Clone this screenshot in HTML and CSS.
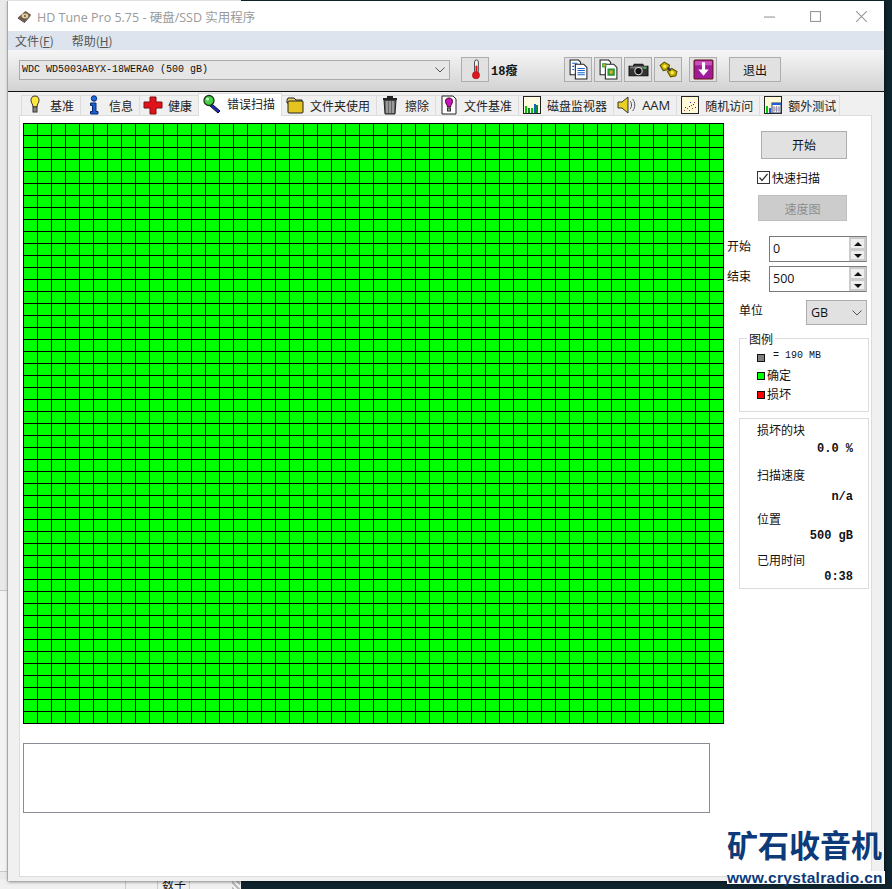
FILE: index.html
```html
<!DOCTYPE html>
<html lang="zh">
<head>
<meta charset="utf-8">
<title>HD Tune Pro 5.75</title>
<link rel="stylesheet" href="styles.css">
</head>
<body>
<div class="desktop">
  <div class="desk-left"><div class="desk-line"></div></div>
  <div class="desk-bottom"><span class="desk-cell wide"></span><span class="desk-cell">数子</span><span class="desk-cell"></span><span class="desk-grip"></span></div>
  <div class="window">
    <header class="titlebar">
      <svg class="app-icon" viewBox="0 0 16 16"><path d="M1 9 9 2l6 4-7 8z" fill="#6b5a45"/><path d="M1 9l7 5 7-8-1 2-6 7-7-5z" fill="#2e2a26"/><ellipse cx="8.500" cy="7.500" rx="3.600" ry="2.600" fill="#e8c9a0"/><circle cx="8.500" cy="7.500" r="1" fill="#554"/></svg>
      <span class="title-text">HD Tune Pro 5.75 - 硬盘/SSD 实用程序</span>
      <div class="win-controls">
        <svg class="win-btn" viewBox="0 0 10 10"><path d="M0 5.500h10" stroke="#999" fill="none"/></svg>
        <svg class="win-btn" viewBox="0 0 10 10"><rect x=".5" y=".5" width="9" height="9" stroke="#999" fill="none"/></svg>
        <svg class="win-btn" viewBox="0 0 10 10"><path d="M0 0l10 10M10 0 0 10" stroke="#999" fill="none"/></svg>
      </div>
    </header>
    <nav class="menubar"><span class="menu-item">文件(<u>F</u>)</span><span class="menu-item">帮助(<u>H</u>)</span></nav>
    <div class="toolbar">
      <div class="drive-select"><span class="drive-name">WDC WD5003ABYX-18WERA0 (500 gB)</span>
        <svg class="chev" viewBox="0 0 10 6"><path d="M.5 .5 5 5 9.500 .5" fill="none" stroke="#555"/></svg></div>
      <div class="tool-btn therm"><svg viewBox="0 0 20 22"><rect x="9" y="1" width="4" height="14" rx="2" fill="#f4f4f4" stroke="#444"/><rect x="10" y="7" width="2" height="9" fill="#d8141c"/><circle cx="10.500" cy="17" r="3.800" fill="#e0141c" stroke="#8a1015" stroke-width=".5"/></svg></div>
      <b class="temp">18癈</b>
      <div class="tool-group">
        <div class="tool-btn"><svg viewBox="0 0 20 20"><path d="M2 1h8l2 2v12H2z" fill="#fff" stroke="#222"/><path d="M7 5h8l3 3v11H7z" fill="#fff" stroke="#222"/><path d="M4 4h5M4 7h2M4 10h2M9 9h7M9 11h7M9 13h7M9 15h7" stroke="#1763c9"/></svg></div>
        <div class="tool-btn"><svg viewBox="0 0 20 20"><path d="M2 1h8l2 2v12H2z" fill="#fff" stroke="#222"/><path d="M7 5h8l3 3v11H7z" fill="#fff" stroke="#222"/><rect x="4" y="4" width="4" height="4" fill="#2a9a3a"/><rect x="9" y="9" width="7" height="7" fill="#2a9a3a"/><rect x="11" y="11" width="3" height="3" fill="#e8b020"/><rect x="5" y="5" width="2" height="2" fill="#e8b020"/></svg></div>
        <div class="tool-btn"><svg viewBox="0 0 20 20"><path d="M1 7h4l1-2h8l1 2h4v9H1z" fill="#333" stroke="#111"/><rect x="2" y="7" width="16" height="2" fill="#777"/><circle cx="10" cy="11.500" r="3.500" fill="#111" stroke="#ddd"/><rect x="15" y="8" width="2" height="1.500" fill="#3c3"/></svg></div>
        <div class="tool-btn"><svg viewBox="0 0 20 20"><g fill="#c8b400" stroke="#5a5200"><path d="M2 6l4-3 5 3-1 4-5 1z"/><path d="M9 12l4-3 5 3-1 4-5 1z"/></g><circle cx="6.500" cy="7" r="1.500" fill="#ffe860"/><circle cx="13.500" cy="13" r="1.500" fill="#ffe860"/><path d="M9 8l3 3" stroke="#333" stroke-width="2"/></svg></div>
        <div class="tool-btn save"><svg viewBox="0 0 20 20"><rect x="1" y="1" width="18" height="18" rx="1" fill="#a01a9a" stroke="#611"/><rect x="2" y="2" width="16" height="4" fill="#c850c0"/><path d="M8.500 3h3v7H15l-5 6-5-6h3.500z" fill="#fff"/></svg></div>
        <div class="exit-btn">退出</div>
      </div>
    </div>
    <div class="body">
      <div class="tabs">
        <div class="tab"><svg class="tab-icon" viewBox="0 0 20 20"><path d="M10 1c3 0 4 2 4 4.500S12 9 12 12H8c0-3-2-4-2-6.500S7 1 10 1z" fill="#ffe83c" stroke="#333"/><rect x="8" y="12" width="4" height="5" fill="#888" stroke="#333"/></svg>基准</div>
        <div class="tab"><svg class="tab-icon" viewBox="0 0 20 20"><circle cx="10" cy="3.500" r="2.700" fill="#1a6be0" stroke="#0a2a70"/><path d="M6.500 8H12v8.500h2V19H6.500v-2.500h2v-6h-2z" fill="#1a5fd0" stroke="#0a2a70"/></svg>信息</div>
        <div class="tab"><svg class="tab-icon" viewBox="0 0 20 20"><path d="M7 2h6v5h6v6h-6v6H7v-6H1V7h6z" fill="#e2121a" stroke="#7a1015"/></svg>健康</div>
        <div class="tab active"><svg class="tab-icon" viewBox="0 0 20 20"><path d="M10 10l8 7-2 2-8-7z" fill="#1c2fa8" stroke="#0a0a40"/><circle cx="7" cy="6.500" r="5" fill="#46d046" stroke="#1b3a1b" stroke-width="1.300"/><circle cx="5.500" cy="5" r="1.500" fill="#c4f5c4"/></svg>错误扫描</div>
        <div class="tab"><svg class="tab-icon" viewBox="0 0 20 20"><path d="M2 5l1-2h6l2 2h6v3H2z" fill="#e8d070" stroke="#222"/><rect x="3" y="6" width="15" height="12" rx="1" fill="#e6c420" stroke="#222"/></svg>文件夹使用</div>
        <div class="tab"><svg class="tab-icon" viewBox="0 0 20 20"><path d="M3 4h14M8 3.500V2h4v1.500" stroke="#222" stroke-width="2" fill="none"/><path d="M4 5h12l-1 14H5z" fill="#666" stroke="#222"/><path d="M7 6v12M10 6v12M13 6v12" stroke="#ccc"/></svg>擦除</div>
        <div class="tab"><svg class="tab-icon" viewBox="0 0 20 20"><path d="M3 1h11l3 3v15H3z" fill="#fff" stroke="#222"/><path d="M10 3c2.500 0 3.500 1.500 3.500 3.500S11.500 10 11.500 12h-3c0-2-2-3.500-2-5.500S7.500 3 10 3z" fill="#c814c0" stroke="#401"/><rect x="8.500" y="13" width="3" height="3" fill="#999" stroke="#333"/></svg>文件基准</div>
        <div class="tab"><svg class="tab-icon" viewBox="0 0 20 20"><rect x="1.500" y="1.500" width="17" height="17" fill="#fffbe0" stroke="#222"/><path d="M3 18v-7h2v7zM9 18v-5h2v5z" fill="#0c0"/><path d="M6 18v-5h2v5zM14 18v-8h2v8z" fill="#0a8a2a"/><path d="M12 18V9h2v9z" fill="#1d5fd0"/></svg>磁盘监视器</div>
        <div class="tab tab-aam"><svg class="tab-icon" viewBox="0 0 20 20"><path d="M1 7h4l6-5v16l-6-5H1z" fill="#ead020" stroke="#333"/><path d="M13 6c2 2 2 6 0 8M15.500 4c3 3 3 9 0 12" stroke="#555" fill="none"/></svg>AAM</div>
        <div class="tab"><svg class="tab-icon" viewBox="0 0 20 20"><rect x="1.500" y="1.500" width="17" height="17" fill="#fffbd8" stroke="#222"/><path d="M4 15h1v1H4zM7 13h1v1H7zM9 15h1v1H9zM11 10h1v1h-1zM14 7h1v1h-1zM12 13h1v1h-1z" fill="#d22"/><path d="M5 12h1v1H5zM9 11h1v1H9zM13 9h1v1h-1zM15 12h1v1h-1zM10 7h1v1h-1z" fill="#22c"/></svg>随机访问</div>
        <div class="tab tab-last"><svg class="tab-icon" viewBox="0 0 20 20"><rect x="1.500" y="1.500" width="17" height="17" fill="#fffbd8" stroke="#222"/><path d="M3 18v-7h2v7z" fill="#0c0"/><path d="M6 18v-5h2v5z" fill="#1d5fd0"/><rect x="9" y="8" width="9" height="10" fill="#fff" stroke="#335"/><rect x="9" y="8" width="9" height="2" fill="#1d5fd0"/><path d="M11 11v6M13.500 11v6M16 11v6M9 13h9M9 15h9" stroke="#99a"/></svg>额外测试</div>
      </div>
      <main class="panel">
        <section class="left-col">
          <div class="map"></div>
          <div class="log"></div>
        </section>
        <aside class="right-col">
          <div class="btn btn-start">开始</div>
          <div class="check-row"><svg class="check" viewBox="0 0 13 13"><rect x=".5" y=".5" width="12" height="12" fill="#fff" stroke="#333"/><path d="M2.500 6.500 5 9.500 10.500 3" fill="none" stroke="#333" stroke-width="1.200"/></svg>快速扫描</div>
          <div class="btn btn-speed">速度图</div>
          <div class="field-row first"><span class="field-label">开始</span><div class="spin"><span class="spin-val">0</span><span class="spin-btns"><i class="up"></i><i class="down"></i></span></div></div>
          <div class="field-row second"><span class="field-label">结束</span><div class="spin"><span class="spin-val">500</span><span class="spin-btns"><i class="up"></i><i class="down"></i></span></div></div>
          <div class="unit-row"><span class="unit-label">单位</span><div class="unit-select">GB<svg class="chev" viewBox="0 0 10 6"><path d="M.5 .5 5 5 9.500 .5" fill="none" stroke="#555"/></svg></div></div>
          <div class="legend">
            <div class="legend-title">图例</div>
            <div class="legend-row mono-row"><span class="swatch gray"></span><span class="legend-size">= 190 MB</span></div>
            <div class="legend-row"><span class="swatch green"></span>确定</div>
            <div class="legend-row"><span class="swatch red"></span>损坏</div>
          </div>
          <div class="stats">
            <div class="stat-label">损坏的块</div><div class="stat-value v1">0.0 %</div>
            <div class="stat-label l2">扫描速度</div><div class="stat-value v2">n/a</div>
            <div class="stat-label l3">位置</div><div class="stat-value v3">500 gB</div>
            <div class="stat-label l4">已用时间</div><div class="stat-value v4">0:38</div>
          </div>
        </aside>
      </main>
    </div>
  </div>
  <div class="watermark">
    <div class="wm-cn">矿石收音机</div>
    <div class="wm-en">www.crystalradio.cn</div>
  </div>
</div>
</body>
</html>
```

FILE: styles.css
```css
* { box-sizing: border-box; }
html, body { margin: 0; padding: 0; }
body { font-family: "Noto Sans CJK SC", "Noto Sans", sans-serif; font-size: 12px; color: #111; }
.desktop { position: relative; width: 892px; height: 889px; overflow: hidden; background: #10242e; }
.desktop::before { content: ""; position: absolute; left: 0; top: 0; width: 241px; height: 2px; background: #f4f4f4; }
.desk-left { position: absolute; left: 0; top: 0; width: 8px; height: 889px; background: #e9e9e9; }
.desk-line { margin-top: 590px; height: 282px; border-top: 1px solid #c8c8c8; border-bottom: 1px solid #c8c8c8; background: #f3f3f3; }
.desk-bottom { position: absolute; left: 0; bottom: 0; width: 241px; height: 10px; background: #f0f0f0; display: flex; align-items: flex-start; overflow: hidden; padding-left: 125px; }
.desk-cell { width: 32px; padding-left: 4px; height: 10px; line-height: 10px; border-left: 1px solid #ccc; flex: none; }
.desk-grip { margin-left: 11px; margin-top: 2px; width: 8px; height: 8px; background: repeating-linear-gradient(45deg, #bbb 0 2px, #f0f0f0 2px 4px); }

.window { position: absolute; left: 7px; top: 1px; width: 877px; height: 880px; display: flex; flex-direction: column; background: #f0f0f0; border-left: 1px solid #a8a8a8; box-shadow: 1px 1px 3px rgba(0,0,0,.45); }
.titlebar { height: 30px; background: #fff; display: flex; align-items: center; padding-left: 9px; flex: none; }
.app-icon { width: 15px; height: 15px; margin-right: 5px; }
.title-text { font-family: "Open Sans", "Noto Sans CJK SC", sans-serif; font-size: 12.500px; color: #9a9a9a; }
.win-controls { margin-left: auto; display: flex; gap: 35px; padding-right: 17px; }
.win-btn { width: 11px; height: 11px; display: block; }
.menubar { height: 19px; background: #dde4ed; display: flex; padding-left: 7px; gap: 18px; flex: none; line-height: 20px; color: #555; font-size: 12px; }
.toolbar { height: 42px; flex: none; background: linear-gradient(#f6f6f6, #d2d2d2); border-bottom: 1px solid #111; display: flex; align-items: center; padding: 0 0 2px 11px; }
.drive-select { width: 431px; height: 20px; background: #e6e6e6; border: 1px solid #ababab; display: flex; align-items: center; justify-content: space-between; padding: 0 4px 0 2px; }
.drive-name, .legend-size { font-family: "Liberation Mono", monospace; font-size: 10px; color: #111; }
.chev { width: 10px; height: 6px; }
.tool-btn { width: 28px; height: 25px; background: #e1e1e1; border: 1px solid #adadad; display: flex; align-items: center; justify-content: center; }
.tool-btn svg { width: 21px; height: 21px; }
.therm { margin-left: 11px; }
.temp { font-family: "Liberation Mono", "Noto Sans CJK SC", monospace; font-size: 12px; margin-left: 2px; width: 73px; }
.tool-group { display: flex; gap: 2px; align-items: center; }
.save { margin-left: 5px; }
.exit-btn { width: 52px; height: 25px; margin-left: 10px; background: #e1e1e1; border: 1px solid #adadad; text-align: center; line-height: 23px; }

.body { flex: 1; min-height: 0; display: flex; flex-direction: column; padding: 1px 12px 4px 11px; }
.tabs { display: flex; height: 22px; align-items: flex-end; flex: none; padding-left: 3px; }
.tab { height: 20px; display: flex; align-items: center; background: #f0f0f0; border: 1px solid #dcdcdc; border-bottom: 0; padding: 0 6px 1px 3px; white-space: nowrap; color: #222; margin-left: -1px; }
.tab.active { height: 23px; background: #fff; padding: 0 6px 3px 3px; position: relative; z-index: 1; margin-bottom: -1px; }
.tab.tab-last { padding-right: 3px; }
.tab-icon { width: 20px; height: 20px; margin-right: 5px; flex: none; }
.tab-aam { font-family: "Open Sans", sans-serif; font-size: 13px; }
.panel { flex: 1; min-height: 0; background: #fff; border: 1px solid #dcdcdc; display: flex; padding: 7px 0 0 3px; }
.left-col { width: 701px; flex: none; }
.map { width: 701px; height: 601px; background-color: #0f0; background-image: repeating-linear-gradient(90deg, #000 0 1px, transparent 1px 14px), repeating-linear-gradient(180deg, #000 0 1px, transparent 1px 12px); border-right: 1px solid #000; border-bottom: 1px solid #000; }
.log { width: 687px; height: 70px; margin-top: 19px; border: 1px solid #888c96; background: #fff; }
.right-col { flex: 1; padding-left: 3px; margin-top: -7px; display: flex; flex-direction: column; align-items: flex-start; }
.btn { background: #e1e1e1; border: 1px solid #adadad; text-align: center; }
.btn-start { width: 86px; height: 28px; margin: 15px 0 0 34px; line-height: 25px; }
.check-row { display: flex; align-items: center; margin: 11px 0 0 30px; height: 15px; }
.check { width: 13px; height: 13px; margin-right: 2px; }
.btn-speed { width: 89px; height: 26px; margin: 10px 0 0 31px; line-height: 25px; background: #ccc; color: #8e8e8e; border-color: #bfbfbf; }
.field-row { display: flex; }
.field-row.first { margin-top: 15px; }
.field-row.second { margin-top: 4px; }
.field-label { width: 42px; line-height: 20px; }
.spin { width: 98px; height: 26px; border: 1px solid #7a7a7a; border-right-color: #b5b5b5; display: flex; justify-content: space-between; background: #fff; }
.spin-val { font-family: "Open Sans", sans-serif; font-size: 12.500px; padding-left: 3px; line-height: 24px; }
.spin-btns { width: 17px; display: flex; flex-direction: column; gap: 1px; background: #ccc; padding: 1px; }
.spin-btns i { flex: 1; background: #eee; border: 1px solid #ccc; display: block; position: relative; }
.spin-btns i::after { content: ""; position: absolute; left: 3px; border-left: 4px solid transparent; border-right: 4px solid transparent; }
.spin-btns .up::after { top: 3px; border-bottom: 4px solid #111; }
.spin-btns .down::after { top: 3px; border-top: 4px solid #111; }
.unit-row { display: flex; margin: 8px 0 0 12px; }
.unit-label { width: 67px; line-height: 20px; }
.unit-select { width: 61px; height: 25px; background: #e1e1e1; border: 1px solid #adadad; display: flex; align-items: center; justify-content: space-between; padding: 0 4px; font-family: "Open Sans", sans-serif; font-size: 12.500px; }
.legend { width: 130px; height: 74px; margin: 13px 0 0 12px; border: 1px solid #dcdcdc; padding-left: 17px; }
.legend-title { width: fit-content; margin: -9px 0 0 -10px; padding: 0 2px; height: 17px; line-height: 17px; background: #fff; }
.legend-row { display: flex; align-items: center; height: 19px; line-height: 19px; }
.mono-row { height: 17px; margin-top: 1px; }
.swatch { width: 8px; height: 8px; border: 1px solid #111; margin-right: 2px; flex: none; margin-top: 3px; }
.gray { background: #808080; }
.green { background: #0f0; }
.red { background: #f00; }
.legend-size { margin: 0 0 3px 6px; }
.stats { width: 130px; height: 171px; margin: 6px 0 0 12px; border: 1px solid #dcdcdc; padding: 2px 15px 0 17px; }
.stat-label { line-height: 17px; height: 17px; }
.stat-value { font-family: "Liberation Mono", monospace; font-weight: bold; font-size: 12px; text-align: right; line-height: 14px; white-space: pre; }
.v1 { margin-top: 4px; }
.l2 { margin-top: 10px; }
.v2 { margin-top: 7px; }
.l3 { margin-top: 6px; }
.v3 { margin-top: 2px; }
.l4 { margin-top: 8px; }
.v4 { margin-top: 2px; }

.watermark { position: absolute; right: 7px; bottom: 5px; width: 158px; }
.wm-cn { font-weight: 700; font-size: 31px; line-height: 32px; color: #0d3a78; white-space: nowrap; text-shadow: 0 0 2px #fff; margin-top: -4px; }
.wm-en { font-family: "Liberation Sans", sans-serif; font-weight: bold; font-size: 15.500px; letter-spacing: .3px; line-height: 13px; margin-top: 11px; color: #0d3a78; background: #fff; white-space: nowrap; }
```
